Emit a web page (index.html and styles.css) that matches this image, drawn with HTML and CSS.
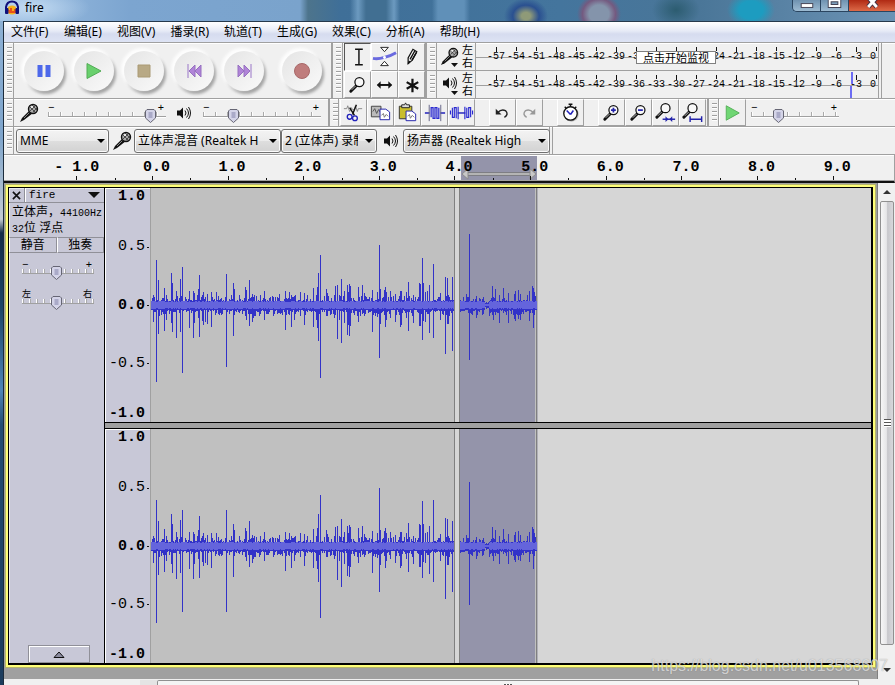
FILE: index.html
```html
<!DOCTYPE html>
<html lang="zh-CN">
<head>
<meta charset="utf-8">
<title>fire</title>
<link rel="stylesheet" href="styles.css">
</head>
<body>
<svg class="defs" width="0" height="0" aria-hidden="true">
  <symbol id="mic" viewBox="0 0 20 20">
    <path d="M1 19 3 15 11 7 14 10 5 17Z" fill="#111"/>
    <path d="M5 15 12 8" stroke="#888" stroke-width="1"/>
    <circle cx="14" cy="6" r="4.5" fill="#aaa" stroke="#111" stroke-width="1.4"/>
    <path d="M11 4l5 5M13 2l5 5M11 8l5-5M14 9l4-4" stroke="#333" stroke-width=".8"/>
    <path d="M12 4h2" stroke="#fff" stroke-width="1.5"/>
  </symbol>
  <symbol id="speaker" viewBox="0 0 14 14">
    <path d="M0 4.500h3L6 1.500v11L3 9.500H0Z" fill="#111"/>
    <path d="M8 4.500q2 2.500 0 5M9.500 2.500q4 4.500 0 9M11.500 1q4 6 0 12" fill="none" stroke="#111"/>
  </symbol>
  <symbol id="glass" viewBox="0 0 18 18">
    <path d="M2 16 8 10" stroke="#111" stroke-width="3" stroke-linecap="round"/>
    <path d="M3 14.500 7 10.500" stroke="#bbb" stroke-width="1"/>
    <circle cx="11" cy="6.500" r="4.700" fill="#f8f8f8" stroke="#111" stroke-width="1.300"/>
  </symbol>
  <symbol id="disc" viewBox="0 0 50 54">
    <circle cx="27" cy="30" r="20" fill="#888" opacity=".75" filter="url(#soft)"/>
    <circle cx="23" cy="25" r="21" fill="#fff" opacity=".9" filter="url(#soft)"/>
    <circle cx="25" cy="27" r="20" fill="url(#dome)"/>
  </symbol>
  <defs>
    <filter id="soft" x="-20%" y="-20%" width="140%" height="140%"><feGaussianBlur stdDeviation="1.6"/></filter>
    <linearGradient id="dome" x1="0" y1="0" x2="1" y2="1"><stop offset="0" stop-color="#e4e4e4"/><stop offset=".45" stop-color="#eee"/><stop offset="1" stop-color="#fafafa"/></linearGradient>
  </defs>
</svg>

<header class="titlebar">
  <svg class="logo" viewBox="0 0 16 16"><ellipse cx="8" cy="10" rx="5" ry="4.500" fill="#f6b21c"/><path d="M4 10h2V8h2v3h2V9h2v4H5Z" fill="#e8521a"/><path d="M2 9V7q1-5.500 6-5.500T14 7v2" fill="none" stroke="#10107a" stroke-width="2"/><rect x="1" y="8" width="3.500" height="6" rx="1" fill="#10107a"/><rect x="11.500" y="8" width="3.500" height="6" rx="1" fill="#10107a"/></svg>
  <h1>fire</h1>
  <div class="winbtns">
    <button aria-label="最小化"><svg viewBox="0 0 28 12"><rect x="8.500" y="3.500" width="12" height="4" fill="#fff" stroke="#445"/></svg></button>
    <button aria-label="最大化"><svg viewBox="0 0 28 12"><path d="M9 0h10v6H9Z" fill="none" stroke="#445" stroke-width="4"/><path d="M9 0h10v6H9Z" fill="none" stroke="#fff" stroke-width="2"/></svg></button>
    <button class="close" aria-label="关闭"><svg viewBox="0 0 48 12"><path d="M20-3l9 10M29-3l-9 10" stroke="#434" stroke-width="5"/><path d="M20-3l9 10M29-3l-9 10" stroke="#fff" stroke-width="3"/></svg></button>
  </div>
</header>

<div class="window">
  <nav class="menubar">
    <a href="#">文件(F)</a><a href="#">编辑(E)</a><a href="#">视图(V)</a><a href="#">播录(R)</a><a href="#">轨道(T)</a><a href="#">生成(G)</a><a href="#">效果(C)</a><a href="#">分析(A)</a><a href="#">帮助(H)</a>
  </nav>

  <div class="row tall">
    <section class="bar transport">
      <i class="grip"></i>
      <button aria-label="暂停"><svg viewBox="0 0 50 54"><use href="#disc"/><path d="M18.500 21h5v12h-5ZM26.500 21h5v12h-5Z" fill="#4d68ea"/></svg></button>
      <button aria-label="播放"><svg viewBox="0 0 50 54"><use href="#disc"/><path d="M18 19.500v15L32 27Z" fill="#69d06d" stroke="#52ac55"/></svg></button>
      <button aria-label="停止"><svg viewBox="0 0 50 54"><use href="#disc"/><path d="M19 21h12v12H19Z" fill="#b8a985" stroke="#aa9a74"/></svg></button>
      <button aria-label="跳至开头"><svg viewBox="0 0 50 54"><use href="#disc"/><path d="M19 20v14" stroke="#9a77c8"/><path d="M26 21v12l-6-6ZM32 21v12l-6-6Z" fill="#b084d8" stroke="#9670c0"/></svg></button>
      <button aria-label="跳至结尾"><svg viewBox="0 0 50 54"><use href="#disc"/><path d="M32 20v14" stroke="#9a77c8"/><path d="M19 21v12l6-6ZM25 21v12l6-6Z" fill="#b084d8" stroke="#9670c0"/></svg></button>
      <button class="record" aria-label="录制"><svg viewBox="0 0 50 54"><use href="#disc"/><circle cx="25" cy="27" r="7.500" fill="#bf7c7c" stroke="#a86868"/></svg></button>
    </section>
    <section class="bar tools">
      <i class="grip"></i>
      <div class="toolgrid">
        <button class="on" aria-label="选择工具"><svg viewBox="0 0 26 26"><path d="M10.500 5.500h8M10.500 21.500h8M14.500 6v15" stroke="#111" stroke-width="1.500"/></svg></button>
        <button aria-label="包络工具"><svg viewBox="0 0 26 26"><path d="M1 15q5 1 12-1t12-5" fill="none" stroke="#6a6adf" stroke-width="3"/><path d="M9 3.500h8L13 8ZM9 22.500h8L13 18Z" fill="#fff" stroke="#222"/><circle cx="13" cy="14" r="1.500" fill="#fff"/></svg></button>
        <button aria-label="绘制工具"><svg viewBox="0 0 26 26"><path d="M9.500 20.500v-6l5-9 4 2.500-5 9Z" fill="#fff" stroke="#111" stroke-width="1.300"/><path d="M11.500 16 16.500 7M13.500 17 18 9M9.500 20.500l1.500-3" stroke="#111" stroke-width="1.500"/></svg></button>
        <button aria-label="缩放工具"><svg viewBox="0 0 26 26"><use href="#glass" x="4" y="4" width="18" height="18"/></svg></button>
        <button aria-label="时间移动工具"><svg viewBox="0 0 26 26"><path d="M6 13.500h14" stroke="#111" stroke-width="2"/><path d="M9 9.500v8l-4-4ZM17 9.500v8l4-4Z" fill="#111"/></svg></button>
        <button aria-label="多功能工具"><svg viewBox="0 0 26 26"><path d="M14 7v14M8 10.500l12 7M8 17.500l12-7" stroke="#111" stroke-width="2.300"/></svg></button>
      </div>
    </section>
    <section class="meters">
      <div class="meter">
        <i class="grip"></i>
        <button class="src" aria-label="录音电平"><svg viewBox="0 0 24 26"><use href="#mic" x="2" y="3" width="19" height="19"/><path d="M13 19h7l-3.500 4Z" fill="#111"/></svg></button>
        <div class="lr"><span>左</span><span>右</span></div>
        <div class="scale" data-covered="-33 -30 -27"><span class="hint">点击开始监视</span></div>
      </div>
      <div class="meter">
        <i class="grip"></i>
        <button class="src" aria-label="播放电平"><svg viewBox="0 0 24 26"><use href="#speaker" x="5" y="4" width="14" height="14"/><path d="M13 19h7l-3.500 4Z" fill="#111"/></svg></button>
        <div class="lr"><span>左</span><span>右</span></div>
        <div class="scale" data-covered=""><i class="peak up"></i><i class="peak down"></i></div>
      </div>
    </section>
  </div>

  <div class="row">
    <section class="bar mixer">
      <i class="grip"></i>
      <svg class="mic" viewBox="0 0 20 20"><use href="#mic"/></svg>
      <div class="slider wide"><div class="ends"><span>−</span><span>+</span></div><input type="range" value="91" aria-label="录音音量"></div>
      <svg class="spk" viewBox="0 0 14 14"><use href="#speaker"/></svg>
      <div class="slider wide"><div class="ends"><span>−</span><span>+</span></div><input type="range" value="23" aria-label="播放音量"></div>
    </section>
    <section class="bar edit">
      <i class="grip"></i>
      <button aria-label="剪切"><svg viewBox="0 0 26 26"><path d="M3 9h3l1-3 2 6 2-4 1 2h2l1-4 2 6 1-3h4" fill="none" stroke="#888"/><path d="M16 5l-4 10M9 8l5 8" stroke="#111" stroke-width="1.500"/><circle cx="9" cy="17.500" r="2.500" fill="none" stroke="#22b" stroke-width="1.400"/><circle cx="14.500" cy="19" r="2.500" fill="none" stroke="#22b" stroke-width="1.400"/></svg></button>
      <button aria-label="复制"><svg viewBox="0 0 26 26"><path d="M3.500 6.500h10v11h-10Z" fill="#bbb" stroke="#444"/><path d="M5 12l2-3 2 5 2-4 2 3" fill="none" stroke="#555"/><path d="M12.500 9.500h6l4 3v8h-10Z" fill="#fff" stroke="#22a"/><path d="M14 16l2-2 1 4 2-3 2 2" fill="none" stroke="#777"/></svg></button>
      <button aria-label="粘贴"><svg viewBox="0 0 26 26"><path d="M4.500 6.500h13v13h-13Z" fill="#c9bd2c" stroke="#333"/><path d="M7 8V5h3l1-2 1 2h3v3Z" fill="#ddd" stroke="#222"/><path d="M11.500 11.500h6l4 3v7h-10Z" fill="#fff" stroke="#22a"/><path d="M13 17l2-2 1 4 2-3 2 2" fill="none" stroke="#777"/></svg></button>
      <button aria-label="修剪"><svg viewBox="0 0 26 26"><path d="M3 13.500h5M19 13.500h5" stroke="#22b" stroke-width="1.500"/><path d="M7.500 5v17M19.500 5v17" stroke="#668"/><path d="M9.500 18V8h2v11h2V8h2v11h2V8" fill="none" stroke="#2828d0" stroke-width="1.300"/></svg></button>
      <button aria-label="静音"><svg viewBox="0 0 26 26"><path d="M9 13.500h8" stroke="#22b" stroke-width="1.500"/><path d="M1.500 15v-4M3.500 8v10h2V8h2v11M9.500 7v13M16.500 7v13M18.500 8v10h2V8h2v10M24.500 11v4" fill="none" stroke="#2828d0" stroke-width="1.200"/></svg></button>
      <button class="gap" aria-label="撤销"><svg viewBox="0 0 26 26"><path d="M8 13q4-4 8-2 4 4-1 7" fill="none" stroke="#222" stroke-width="1.500"/><path d="M6 9v6h6Z" fill="#222"/></svg></button>
      <button aria-label="重做"><svg viewBox="0 0 26 26"><path d="M17 13q-4-4-8-2-4 4 1 7" fill="none" stroke="#999" stroke-width="1.500"/><path d="M19 9v6h-6Z" fill="#999"/></svg></button>
      <button class="gap" aria-label="同步锁定"><svg viewBox="0 0 26 26"><circle cx="14" cy="15" r="7.500" fill="#bbb"/><circle cx="13" cy="14" r="7" fill="#fff" stroke="#111" stroke-width="1.400"/><path d="M13 4v3M11 4.500h4M7 7l2 2M19 7l-2 2" stroke="#111" stroke-width="1.500"/><path d="M13 15 9 11M13 15l3-4" stroke="#22b" stroke-width="1.600"/></svg></button>
      <button class="gap" aria-label="放大"><svg viewBox="0 0 26 26"><use href="#glass" x="4" y="4" width="18" height="18"/><path d="M12.500 10.500h5M15 8v5" stroke="#22a" stroke-width="1.800"/></svg></button>
      <button aria-label="缩小"><svg viewBox="0 0 26 26"><use href="#glass" x="4" y="4" width="18" height="18"/><path d="M12.500 10.500h5" stroke="#22a" stroke-width="1.800"/></svg></button>
      <button aria-label="适应选择"><svg viewBox="0 0 26 26"><use href="#glass" x="2" y="2" width="18" height="18"/><path d="M10 20h13" stroke="#22a" stroke-width="1.500"/><path d="M13 17v6l3-3ZM20 17v6l-3-3Z" fill="#22a"/></svg></button>
      <button aria-label="适应项目"><svg viewBox="0 0 26 26"><use href="#glass" x="2" y="2" width="18" height="18"/><path d="M10.500 20h12M10.500 17v6M22.500 17v6" stroke="#22a" stroke-width="1.500"/></svg></button>
    </section>
    <section class="bar transcription">
      <i class="grip"></i>
      <button aria-label="变速播放"><svg viewBox="0 0 26 26"><path d="M6.500 6v15L20 13.500Z" fill="#6fd673" stroke="#55b058"/></svg></button>
      <div class="slider mid"><div class="ends"><span>−</span><span>+</span></div><input type="range" value="29" aria-label="播放速度"></div>
    </section>
  </div>

  <div class="row">
    <section class="bar device">
      <i class="grip"></i>
      <span class="combo c1"><select aria-label="音频主机"><option>MME</option></select></span>
      <svg class="mic" viewBox="0 0 20 20"><use href="#mic"/></svg>
      <span class="combo c2"><select aria-label="录音设备"><option>立体声混音 (Realtek H</option></select></span>
      <span class="combo c3"><select aria-label="录音声道"><option>2 (立体声) 录制</option></select></span>
      <svg class="spk" viewBox="0 0 14 14"><use href="#speaker"/></svg>
      <span class="combo c4"><select aria-label="播放设备"><option>扬声器 (Realtek High</option></select></span>
    </section>
  </div>

  <div class="timeline">
    <div class="range"><svg viewBox="0 0 76 14" preserveAspectRatio="none"><path d="M5 7h66" stroke="#777" stroke-width="4"/><path d="M5 7h66" stroke="#c8c8c8" stroke-width="2"/><path d="M7 1v12L1 7ZM69 1v12l6-6Z" fill="#c8c8c8" stroke="#888"/></svg></div>
    <div class="ticks" id="ticks"></div>
  </div>

  <main class="workspace">
    <div class="trackarea">
      <div class="track">
        <aside class="panel">
          <div class="phead"><button class="x" aria-label="关闭轨道"><svg viewBox="0 0 10 10"><path d="M1 1l8 8M9 1l-8 8" stroke="#111" stroke-width="1.800"/></svg></button><button class="name">fire<svg viewBox="0 0 12 6"><path d="M0 0h12L6 6Z" fill="#111"/></svg></button></div>
          <p class="info">立体声，<span>44100Hz</span><br><span>32</span>位 浮点</p>
          <div class="ms"><button>静音</button><button>独奏</button></div>
          <div class="slider small"><div class="ends"><span>−</span><span>+</span></div><input type="range" value="47" aria-label="增益"></div>
          <div class="slider small"><div class="ends lrs"><span>左</span><span>右</span></div><input type="range" value="47" aria-label="声像"></div>
          <button class="collapse" aria-label="折叠"><svg viewBox="0 0 12 7"><path d="M1 6.500h10L6 1Z" fill="#8c8ca0" stroke="#111"/></svg></button>
        </aside>
        <div class="channels">
          <div class="channel">
            <div class="vruler"><b>1.0</b><span>0.5</span><b>0.0</b><span>-0.5</span><b>-1.0</b></div>
            <div class="wave"><div class="clip one"></div><div class="clip two"></div><svg class="plot" data-ch="0" width="390" height="180" viewBox="0 -90 390 180" shape-rendering="crispEdges"></svg></div>
          </div>
          <div class="divider"></div>
          <div class="channel">
            <div class="vruler"><b>1.0</b><span>0.5</span><b>0.0</b><span>-0.5</span><b>-1.0</b></div>
            <div class="wave"><div class="clip one"></div><div class="clip two"></div><svg class="plot" data-ch="1" width="390" height="180" viewBox="0 -90 390 180" shape-rendering="crispEdges"></svg></div>
          </div>
        </div>
      </div>
    </div>
    <div class="vscroll"><i class="tri up"></i><div class="vthumb"><i></i></div><i class="tri down"></i></div>
    <span class="mark">https://blog.csdn.net/u013568607</span>
  </main>
  <footer class="hscroll"><i></i><div class="hthumb"></div></footer>
</div>
<script src="app.js"></script>
</body>
</html>
```
FILE: styles.css
```css
* { box-sizing: border-box; }
body {
  margin: 0; height: 100vh; overflow: hidden; display: flex; flex-direction: column;
  font: 12px/16px "Noto Sans", "Noto Sans CJK SC", sans-serif; color: #000;
  background: linear-gradient(#8fb2d6 0, #7fa5cc 20%, #c3cbd2 32%, #142c48 34%, #1d4668 45%, #4f86b8 57%, #234d74 62%, #1b3c5c 100%);
}
.defs { position: absolute; }
button { appearance: none; border: 0; padding: 0; margin: 0; background: none; font: inherit; color: inherit; }
svg { display: block; }

.titlebar {
  height: 21px; flex: none; display: flex; align-items: flex-start; padding-left: 4px;
  background:
    radial-gradient(ellipse 60px 20px at 30px 8px, #c3dbf2, transparent),
    radial-gradient(ellipse 22px 18px at 526px 16px, #8f9a78 20%, #2a5090 60%, transparent),
    radial-gradient(ellipse 22px 20px at 599px 14px, #8494ab 45%, #745a80 75%, transparent),
    radial-gradient(ellipse 24px 18px at 751px 10px, #1d9cc0 50%, transparent),
    radial-gradient(ellipse 24px 18px at 676px 10px, #2c5c70, transparent),
    linear-gradient(90deg, transparent 350px, #6c9ac0 358px, #416f92 366px, #416f92 386px, #6c9ac0 394px, transparent 400px),
    linear-gradient(90deg, transparent 432px, #6090b8 438px, #6090b8 464px, transparent 470px),
    linear-gradient(90deg, #9dbfe2, #7ca5d0 130px, #7aa3cc 300px, #4d748c 308px, #3f6f98 340px, #44759d 560px, #4a7698 700px, #6c93b5);
}
.logo { width: 16px; height: 16px; }
h1 { margin: 0; padding-left: 5px; font-size: 12px; line-height: 15px; font-weight: 400; }
.winbtns { margin-left: auto; display: flex; height: 12px; border: 1px solid #2a4560; border-top: 0; border-right: 0; border-radius: 0 0 0 5px; overflow: hidden; }
.winbtns button { width: 28px; border-right: 1px solid #2a4560; background: linear-gradient(#6f92b0, #9dbbd2); }
.winbtns .close { width: 46px; background: linear-gradient(#b02a14, #dd6a48); border: 0; }
.winbtns svg { width: 100%; height: 12px; }

.window { flex: 1; min-height: 0; margin-left: 4px; display: flex; flex-direction: column; background: #f0f0f0; border-top: 1px solid #26394c; box-shadow: -1px 0 #1c2c3c; }
.menubar { height: 20px; flex: none; display: flex; gap: 15px; padding: 2px 0 0 7px; background: linear-gradient(#fff, #e6eaf6 45%, #d6dcef 60%, #dde3f4); white-space: nowrap; }
.menubar a { color: #000; text-decoration: none; line-height: 16px; min-width: 38px; }

.row { display: flex; flex: none; height: 28px; border-top: 1px solid #a0a0a0; box-shadow: inset 0 1px #fff; }
.row.tall { height: 56px; }
.bar { display: flex; align-items: stretch; border-right: 2px solid #a0a0a0; }
.grip { flex: none; width: 10px; margin-right: 1px; border-right: 1px solid #a0a0a0; background: repeating-linear-gradient(#a0a0a0 0 1px, #fff 1px 2px, transparent 2px 4px) 3px 4px / 5px calc(100% - 8px) no-repeat; }
.transport { width: 329px; padding-right: 3px; }
.transport button { width: 50px; }
.transport button:nth-of-type(1) { margin-left: 4px; }
.transport .record { margin-left: 8px; }
.transport svg { width: 50px; height: 54px; }
.tools { width: 94px; }
.toolgrid { display: grid; grid-template-columns: repeat(3, 27px); grid-template-rows: 1fr 1fr; }
.toolgrid button, .edit button, .transcription button { border: solid; border-width: 1px; border-color: #fff #a0a0a0 #a0a0a0 #fff; width: 27px; }
.toolgrid svg, .edit svg, .transcription button svg { width: 100%; height: 25px; }
.toolgrid .on { border-color: #555 #fff #fff #555; }

.meters { flex: 1; margin-right: 13px; display: flex; flex-direction: column; border-right: 4px double #a0a0a0; min-width: 0; }
.meter { flex: 1; display: flex; min-width: 0; }
.meter + .meter { border-top: 1px solid #a0a0a0; }
.src { width: 24px; }
.src svg { width: 24px; height: 26px; }
.lr { width: 13px; display: flex; flex-direction: column; font-size: 11px; line-height: 14px; }
.lr span { height: 13px; }
.scale { flex: 1; position: relative; display: flex; padding-left: 10px; border-left: 1px solid #a0a0a0; background: linear-gradient(#a0a0a0, #a0a0a0) 0 14px / 100% 1px no-repeat; overflow: hidden; }
.db { flex: none; width: 20px; text-align: center; font: 10px/12px "Liberation Mono", monospace; background: linear-gradient(#111, #111) 50% 4px / 1px 4px no-repeat; padding-top: 8px; white-space: nowrap; }
.db:nth-of-type(3n+1) { background-size: 1px 5px; }
.db:last-child { width: 11px; text-align: right; padding-right: 1px; background-position: 100% 4px; }
.hint { position: absolute; left: 160px; top: 8px; width: 80px; height: 13px; border: 1px solid #808080; background: #fff; font-size: 11px; line-height: 11px; text-align: center; white-space: nowrap; }
.peak { position: absolute; width: 2px; height: 12px; background: #6c6cf4; }
.peak.up { left: 375px; top: 1px; }
.peak.down { left: 374px; top: 15px; }

.mic { width: 20px; height: 20px; flex: none; align-self: center; }
.spk { width: 14px; height: 14px; flex: none; align-self: center; }
.mixer { width: 326px; }
.mixer .mic { margin: 0 9px 0 4px; }
.mixer .spk { margin: 0 12px 0 11px; }
.slider { padding-top: 3px; }
.wide { width: 118px; }
.mid { width: 88px; margin-left: 5px; }
.ends { display: flex; justify-content: space-between; height: 6px; line-height: 10px; font-size: 11px; padding-right: 2px; }
.ends span { line-height: 9px; }
.lrs { font-size: 9px; }
input[type=range] {
  appearance: none; display: block; width: 100%; height: 15px; margin: 0;
  background:
    linear-gradient(#a0a0a0, #a0a0a0) 0 8px / 100% 1px no-repeat,
    linear-gradient(#fff, #fff) 0 9px / 100% 1px no-repeat,
    repeating-linear-gradient(90deg, #aaa 0 1px, #fff 1px 2px, transparent 2px 12px) 0 4px / 100% 4px no-repeat;
}
.small input { background:
    linear-gradient(#a0a0a0, #a0a0a0) 0 8px / 100% 1px no-repeat,
    repeating-linear-gradient(90deg, #fff 0 1px, #aaa 1px 2px, transparent 2px 7px) 0 4px / 100% 4px no-repeat; }
input[type=range]::-webkit-slider-thumb {
  appearance: none; width: 11px; height: 15px;
  background: url("data:image/svg+xml,%3Csvg xmlns='http://www.w3.org/2000/svg' viewBox='0 0 11 15'%3E%3Cpath d='M2 1.500h7l1.500 1.500v7L5.500 14.500.5 10V3Z' fill='%23d4d4e8' stroke='%23666674'/%3E%3Cpath d='M3.500 5h4M3.500 7h4M3.500 9h4' stroke='%238080a8'/%3E%3C/svg%3E") no-repeat;
}
.edit { width: 379px; }
.edit .grip { width: 9px; margin-right: 1px; }
.edit .gap { margin-left: 14px; }
.transcription { border-right: 0; }
.transcription .grip { margin-right: 0; }

.device { align-items: center; width: 549px; border-right: 4px double #a0a0a0; }
.device .grip { align-self: stretch; }
.combo { position: relative; flex: none; height: 24px; margin-top: 1px; }
.combo select { appearance: none; width: 100%; height: 100%; padding: 0 18px 0 3px; border: 1px solid #707070; border-radius: 3px; background: linear-gradient(#f3f3f3, #ebebeb 50%, #dedede 51%, #d2d2d2); box-shadow: inset 0 0 0 1px #fbfbfb; font: 12px/20px "Noto Sans", "Noto Sans CJK SC", sans-serif; color: #000; text-overflow: clip; }
.combo::after { content: ""; position: absolute; right: 4px; top: 10px; border: solid transparent; border-width: 4px 4px 0; border-top-color: #000; }
.c1 { width: 93px; margin: 1px 3px 0 1px; }
.c2 { width: 147px; margin-left: 2px; }
.c3 { width: 96px; }
.device .spk { margin: 0 5px 0 7px; }
.c4 { width: 147px; }

.timeline { position: relative; height: 29px; flex: none; border: 1px solid #a0a0a0; border-left: 0; border-bottom: 2px solid #111; box-shadow: inset 0 1px #fff, inset 0 -1px #a0a0a0; }
.range { position: absolute; left: 457px; top: 1px; bottom: 1px; width: 76px; background: #9494aa; }
.range svg { width: 76px; height: 12px; margin-top: 12px; }
.ticks { position: relative; height: 25px; margin: 0 23px 0 35px; display: grid; grid-template-columns: repeat(11, 1fr); }
.ticks span { text-align: center; font: bold 15px/26px "Liberation Mono", monospace; white-space: pre; padding-left: 8px; background: linear-gradient(#111, #111) 50% 21px / 1px 4px no-repeat, linear-gradient(#111, #111) 0 23px / 1px 2px no-repeat; }
.ticks span:first-child { padding-left: 0; }

.workspace { flex: 1; min-height: 0; position: relative; display: flex; background: #a0a0a0; }
.trackarea { flex: 1; min-width: 0; padding: 1px 1px 11px 1px; display: flex; }
.track { flex: 1; min-width: 0; display: flex; border: 1px solid #000; border-width: 1px 2px 2px 1px; margin: 3px; box-shadow: 0 0 0 2px #ffff78, 0 0 0 3px #b4b46c; background: #c8c8d7; }
.panel { flex: none; width: 96px; border-right: 1px solid #000; display: flex; flex-direction: column; box-shadow: inset 1px 1px #e8e8f0; }
.phead, .ms { display: flex; }
.phead { height: 15px; border-bottom: 1px solid #909098; }
.phead .x { width: 16px; border-right: 1px solid #909098; display: flex; align-items: center; justify-content: center; }
.x svg { width: 9px; height: 9px; }
.name { flex: 1; display: flex; justify-content: space-between; align-items: center; padding: 0 4px 0 3px; font: 11px/14px "Liberation Mono", monospace; border-left: 1px solid #fff; }
.name svg { width: 12px; height: 6px; }
.info { margin: 0; padding: 1px 0 0 3px; height: 34px; white-space: nowrap; line-height: 16px; }
.info span { font: 10px/12px "Liberation Mono", monospace; }
.ms { height: 16px; margin-bottom: 3px; }
.ms button { flex: 1; border: 1px solid; border-color: #909098 #909098 #909098 #fff; line-height: 14px; }
.small { width: 72px; margin: 0 auto 6px 13px; }
.collapse { margin: auto auto 0 19px; width: 62px; height: 18px; border: 1px solid #909098; box-shadow: inset 1px 1px #fff; display: flex; align-items: center; justify-content: center; }
.collapse svg { width: 12px; height: 7px; }

.channels { flex: 1; min-width: 0; display: flex; flex-direction: column; }
.channel { flex: 1; min-height: 0; display: flex; }
.divider { flex: none; height: 7px; background: #a0a0a0; border: solid #000; border-width: 1px 0; }
.vruler { flex: none; width: 46px; display: grid; grid-template-rows: 1fr 2fr 2fr 2fr 1fr; align-items: center; text-align: right; padding: 1px 5px 0 0; font: 15px/16px "Liberation Mono", monospace; border-right: 1px solid #a0a0a0; box-shadow: inset 1px 1px #fff; }
.vruler :first-child { align-self: start; }
.vruler :last-child { align-self: end; }
.vruler :nth-child(n+2):nth-child(-n+4) { margin-right: -4px; padding-right: 4px; background: linear-gradient(#111, #111) 100% 50% / 2px 1px no-repeat; }
.wave { flex: 1; min-width: 0; position: relative; display: flex; gap: 4px; background: #d6d6d6; }
.clip.one { width: 304px; background: #c0c0c0; border-right: 1px solid #808080; }
.clip.two { width: 78px; background: #9494aa; border: solid #808080; border-width: 0 1px; box-shadow: 1px 0 #b0b0b8, inset -1px 0 #c0c0c0; }
.plot { position: absolute; left: 0; top: 50%; margin-top: -90px; }

.vscroll { flex: none; width: 18px; padding: 0 1px 0 2px; display: flex; flex-direction: column; align-items: center; background: #f0f0f0; border-left: 1px solid #808080; }
.vthumb { flex: 1; align-self: stretch; border: 1px solid #909090; border-radius: 2px; background: linear-gradient(90deg, #f6f6f6, #e6e6e8 45%, #c8c8cc 55%, #d8d8dc); display: flex; align-items: center; justify-content: center; }
.vthumb i { width: 7px; height: 8px; background: repeating-linear-gradient(#555 0 1px, #fff 1px 3px); }
.tri { border: solid transparent; height: 0; }
.tri.up { border-width: 0 4px 4px; border-bottom-color: #333; margin: 7px 0; }
.tri.down { border-width: 4px 4px 0; border-top-color: #333; margin: 23px 0 7px; }
.mark { position: absolute; right: 7px; bottom: 3px; font: 16px/20px "Liberation Sans", sans-serif; color: rgba(255,255,255,.65); text-shadow: 0 0 1px rgba(90,90,90,.6); }
.hscroll { flex: none; height: 6px; display: flex; padding: 1px 36px 0 136px; overflow: hidden; }
.hscroll > i { width: 17px; background: #e4e4e4; }
.hthumb { flex: 1; border: 1px solid #909090; border-bottom: 0; border-radius: 2px 2px 0 0; background: repeating-linear-gradient(90deg, #555 0 2px, #fff 2px 3px) 50% 3px / 8px 1px no-repeat, #f4f4f4; }
```
FILE: app.js
```js
// Time ruler labels, in seconds
const ticks = document.getElementById("ticks");
for (let s = -1; s <= 9; s++) {
  const el = document.createElement("span");
  el.textContent = s < 0 ? "- 1.0" : s + ".0";
  ticks.append(el);
}

// Level meter labels, in decibels; the ones under the hint box stay blank
for (const scale of document.querySelectorAll(".scale")) {
  const covered = scale.dataset.covered.split(" ");
  for (let db = -57; db <= 0; db += 3) {
    const el = document.createElement("div");
    el.className = "db";
    el.textContent = covered.includes(String(db)) ? "" : db;
    scale.append(el);
  }
}

// Peaks: x, height above and depth below the centre line
const peaks = [[2,10,17],[5,45,77],[7,25,29],[13,17,26],[15,10,15],[20,32,18],[21,22,27],[25,14,33],[29,26,27],[31,38,68],[38,14,23],[42,14,33],[43,12,18],[47,16,13],[48,30,32],[51,10,16],[52,13,20],[54,8,17],[56,11,19],[60,13,22],[65,13,8],[75,31,62],[82,22,31],[83,16,10],[94,18,11],[95,15,15],[98,25,21],[101,11,17],[102,6,13],[113,14,15],[122,8,11],[128,11,8],[134,14,25],[138,13,9],[140,10,22],[143,9,15],[149,13,11],[153,12,20],[162,17,22],[165,10,15],[166,18,23],[167,32,36],[169,50,73],[175,16,11],[176,12,11],[183,10,13],[184,19,10],[186,20,34],[188,10,15],[190,26,38],[193,14,18],[196,20,30],[197,13,20],[198,21,31],[199,19,21],[207,18,17],[211,20,9],[213,12,10],[221,15,27],[226,13,12],[228,60,53],[229,16,19],[233,15,10],[234,18,22],[235,13,15],[239,14,13],[244,11,17],[249,14,22],[250,14,20],[255,13,13],[257,23,26],[262,10,18],[268,22,21],[269,21,21],[271,47,35],[272,22,16],[274,13,17],[276,14,8],[278,20,28],[282,41,33],[289,12,15],[294,28,49],[296,27,19],[297,10,19],[301,28,46],[315,11,5],[318,71,55],[325,9,13],[341,19,10],[342,8,15],[344,16,10],[348,10,18],[352,17,8],[357,12,18],[363,11,14],[364,14,16],[367,15,14],[369,11,15],[378,14,16],[381,19,8],[382,17,23],[383,13,10]];
const second = { 5:[46,77], 31:[36,66], 75:[36,66], 169:[51,72], 190:[27,41], 228:[58,46], 271:[45,32], 278:[20,28], 282:[46,36], 294:[28,53], 301:[25,46], 318:[64,59] };

for (const svg of document.querySelectorAll(".plot")) {
  const ch = +svg.dataset.ch;
  const map = new Map(peaks.map(p => [p[0], [p[1], p[2]]]));
  if (ch) for (const k in second) map.set(+k, second[k]);
  let seed = 17;
  const rnd = () => (seed = (seed * 16807) % 2147483647) / 2147483647;
  let outer = "", inner = "";
  for (let x = 0; x < 386; x++) {
    const a = rnd(), b = rnd(), c = rnd();
    if (x > 302 && x < 309) continue;
    const quiet = x > 333 && x < 338;
    let up = quiet ? 2 + Math.round(a * 2) : 4 + Math.round(a * a * a * 6);
    let down = quiet ? 2 + Math.round(b * 2) : 5 + Math.round(b * b * 6);
    const p = map.get(x);
    if (p) { up = Math.max(up, p[0]); down = Math.max(down, p[1]); }
    outer += `M${x} ${-up}h1V${down}h-1Z`;
    const r = quiet ? 1 : 3 + Math.round(c * 1.4);
    inner += `M${x} ${-r}h1V${r}h-1Z`;
  }
  svg.innerHTML = `<path d="${outer}" fill="#3232c8"/><path d="${inner}" fill="#6464dc"/>`;
}
```
